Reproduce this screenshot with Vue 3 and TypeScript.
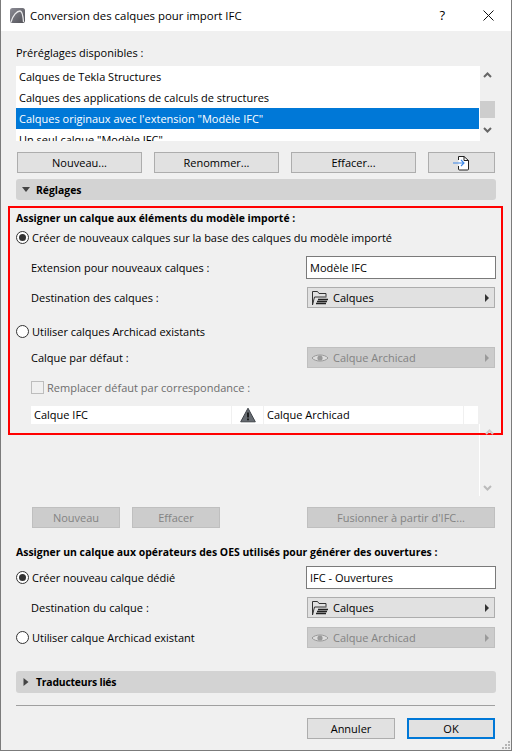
<script setup lang="ts">
const presets: string[] = [
  'Calques de Tekla Structures',
  'Calques des applications de calculs de structures',
  'Calques originaux avec l\'extension "Modèle IFC"',
  'Un seul calque "Modèle IFC"',
]
const selectedPreset = 2
</script>

<template>
  <div class="window">
    <header class="titlebar">
      <svg class="logo" width="15" height="15" viewBox="0 0 15 15">
        <defs>
          <linearGradient id="lg" x1="0" y1="0" x2="1" y2="1">
            <stop offset="0" stop-color="#8d8d96" />
            <stop offset="1" stop-color="#4f4f55" />
          </linearGradient>
        </defs>
        <rect width="15" height="15" rx="2.5" fill="url(#lg)" />
        <path d="M1 14C3 7 7 3 10 3c2 0 3 4 3.500 11" fill="none" stroke="#e8e8ea" stroke-width="1.300" />
      </svg>
      <span class="title">Conversion des calques pour import IFC</span>
      <span class="help">?</span>
      <svg class="close" width="11" height="11" viewBox="0 0 11 11">
        <path d="M.5.5l10 10M10.500.5l-10 10" stroke="#111" stroke-width="1" fill="none" />
      </svg>
    </header>

    <main class="body">
      <div class="label presets-label">Préréglages disponibles :</div>
      <div class="presets">
        <ul class="list">
          <li v-for="(p, i) in presets" :key="p" :class="{ sel: i === selectedPreset }">{{ p }}</li>
        </ul>
        <div class="scroll">
          <svg width="9" height="6" viewBox="0 0 9 6"><path d="M1 5l3.500-3.500L8 5" fill="none" stroke="#666" stroke-width="2" /></svg>
          <div class="thumb"></div>
          <svg width="9" height="6" viewBox="0 0 9 6"><path d="M1 1l3.500 3.500L8 1" fill="none" stroke="#666" stroke-width="2" /></svg>
        </div>
      </div>

      <div class="preset-btns">
        <button class="btn w125">Nouveau...</button>
        <button class="btn w125">Renommer...</button>
        <button class="btn w125">Effacer...</button>
        <button class="btn w67">
          <svg width="17" height="16" viewBox="0 0 17 16">
            <path d="M5.500 5V1.500H11L15.500 5.500V14a1 1 0 0 1-1 1H6.500a1 1 0 0 1-1-1V11" fill="#fff" stroke="#222" />
            <path d="M11 1.500V5.500h4.500" fill="none" stroke="#222" />
            <path d="M0 8h11M8 5l3 3-3 3" fill="none" stroke="#3a86e8" stroke-width="1.100" />
          </svg>
        </button>
      </div>

      <div class="section-bar settings-bar">
        <svg width="8" height="5" viewBox="0 0 8 5"><path d="M0 0h8L4 5z" fill="#444" /></svg>
        <span>Réglages</span>
      </div>

      <section class="red-box">
        <div class="heading first">Assigner un calque aux éléments du modèle importé :</div>
        <label class="row radio-row r1">
          <span class="radio on"></span>Créer de nouveaux calques sur la base des calques du modèle importé
        </label>
        <div class="row between indent r2">
          <span>Extension pour nouveaux calques :</span>
          <input class="field" value="Modèle IFC" />
        </div>
        <div class="row between indent r3">
          <span>Destination des calques :</span>
          <div class="select">
            <svg class="ic" width="18" height="16" viewBox="0 0 18 16">
              <path d="M1.500 15V1.500h5l1.500 2h7v3" fill="none" stroke="#333" />
              <path d="M1.500 15l2-8h12" fill="none" stroke="#333" />
              <path d="M7 9.500h10M6 11.500h10M5 13.500h10" stroke="#222" stroke-width="1.300" />
            </svg>
            <span class="grow">Calques</span>
            <i class="tri"></i>
          </div>
        </div>
        <label class="row radio-row r4"><span class="radio"></span>Utiliser calques Archicad existants</label>
        <div class="row between indent r5">
          <span>Calque par défaut :</span>
          <div class="select off">
            <svg class="ic" width="18" height="16" viewBox="0 0 18 16">
              <path d="M1 8c3-4 13-4 16 0-3 4-13 4-16 0z" fill="#ddd" stroke="#999" />
              <circle cx="9" cy="8" r="2.600" fill="#999" />
            </svg>
            <span class="grow">Calque Archicad</span>
            <i class="tri"></i>
          </div>
        </div>
        <label class="row indent check-row">
          <span class="check"></span>Remplacer défaut par correspondance :
        </label>
        <div class="table-head">
          <div class="c1">Calque IFC</div>
          <div class="c2">
            <svg width="16" height="16" viewBox="0 0 16 16">
              <path d="M8 1.200L15.300 14.800H.7z" fill="#676c72" stroke="#3f4349" stroke-linejoin="round" />
              <path d="M8 5.500v5M8 11.400v1.800" stroke="#111" stroke-width="1.700" />
            </svg>
          </div>
          <div class="c3">Calque Archicad</div>
          <div class="c4"></div>
        </div>
        <svg class="table-up" width="9" height="6" viewBox="0 0 9 6"><path d="M1 5l3.500-3.500L8 5" fill="none" stroke="#ccc" stroke-width="2" /></svg>
      </section>

      <div class="table-rest">
        <svg width="9" height="6" viewBox="0 0 9 6"><path d="M1 1l3.500 3.500L8 1" fill="none" stroke="#bbb" stroke-width="2" /></svg>
      </div>

      <div class="table-btns">
        <div class="left-btns">
          <button class="btn off w88">Nouveau</button>
          <button class="btn off w88">Effacer</button>
        </div>
        <button class="btn off w188">Fusionner à partir d'IFC...</button>
      </div>

      <div class="heading second">Assigner un calque aux opérateurs des OES utilisés pour générer des ouvertures :</div>
      <div class="row between r6">
        <label class="radio-row"><span class="radio on"></span>Créer nouveau calque dédié</label>
        <input class="field" value="IFC - Ouvertures" />
      </div>
      <div class="row between indent r7">
        <span>Destination du calque :</span>
        <div class="select">
          <svg class="ic" width="18" height="16" viewBox="0 0 18 16">
            <path d="M1.500 15V1.500h5l1.500 2h7v3" fill="none" stroke="#333" />
            <path d="M1.500 15l2-8h12" fill="none" stroke="#333" />
            <path d="M7 9.500h10M6 11.500h10M5 13.500h10" stroke="#222" stroke-width="1.300" />
          </svg>
          <span class="grow">Calques</span>
          <i class="tri"></i>
        </div>
      </div>
      <div class="row between r8">
        <label class="radio-row"><span class="radio"></span>Utiliser calque Archicad existant</label>
        <div class="select off">
          <svg class="ic" width="18" height="16" viewBox="0 0 18 16">
            <path d="M1 8c3-4 13-4 16 0-3 4-13 4-16 0z" fill="#ddd" stroke="#999" />
            <circle cx="9" cy="8" r="2.600" fill="#999" />
          </svg>
          <span class="grow">Calque Archicad</span>
          <i class="tri"></i>
        </div>
      </div>

      <div class="section-bar linked-bar">
        <svg width="5" height="8" viewBox="0 0 5 8"><path d="M0 0v8l5-4z" fill="#444" /></svg>
        <span>Traducteurs liés</span>
      </div>

      <hr class="sep" />

      <div class="footer">
        <button class="btn w88">Annuler</button>
        <button class="btn w88 primary">OK</button>
      </div>
    </main>
    <svg class="grip" width="9" height="9" viewBox="0 0 9 9">
      <path d="M6 0h2v2H6zM3 3h2v2H3zM6 3h2v2H6zM0 6h2v2H0zM3 6h2v2H3zM6 6h2v2H6z" fill="#b5b5b5" />
    </svg>
  </div>
</template>

<style>
html, body { margin: 0; background: #f0f0f0; }
</style>

<style scoped>
* { box-sizing: border-box; }
.window {
  position: relative;
  width: 512px;
  height: 751px;
  background: #f0f0f0;
  border: 1px solid #7b7b7b;
  border-top: 0;
  font-family: "Open Sans", "Noto Sans", sans-serif;
  font-size: 11px;
  color: #000;
  overflow: hidden;
}
.titlebar {
  height: 31px;
  background: #fff;
  display: flex;
  align-items: center;
  padding-left: 9px;
}
.logo { margin-right: 5px; }
.title { font-size: 11.4px; flex: 1; }
.help { font-size: 13px; margin-right: 38px; padding-bottom: 2px; }
.close { margin-right: 17px; }
.body { padding: 0 15px; display: flex; flex-direction: column; }
.label, .heading { line-height: 16px; }
.presets-label { margin-top: 14px; height: 21px; }
.presets { display: flex; height: 75px; }
.list {
  list-style: none;
  margin: 0;
  padding: 0;
  width: 464px;
  background: #fff;
  overflow: hidden;
}
.list li { height: 21px; line-height: 21px; padding-left: 3px; }
.list li.sel { background: #0078d7; color: #fff; margin-right: 1px; }
.scroll {
  width: 15px;
  display: flex;
  flex-direction: column;
  align-items: center;
  padding-top: 6px;
}
.thumb { width: 15px; height: 17px; background: #cdcdcd; margin: 23px 0 9px; }
.preset-btns { display: flex; gap: 12px; margin: 11px 0 6px 1px; }
.btn {
  height: 21px;
  padding: 0;
  border: 1px solid #adadad;
  background: #e1e1e1;
  font: inherit;
  color: #000;
  display: flex;
  align-items: center;
  justify-content: center;
}
.btn.off { background: #cccccc; border-color: #bfbfbf; color: #838383; }
.w125 { width: 125px; }
.w67 { width: 67px; }
.w88 { width: 88px; }
.w188 { width: 188px; }
.primary { border: 2px solid #0078d7; }
.section-bar {
  height: 21px;
  width: 480px;
  background: #d3d3d3;
  border-radius: 3px;
  display: flex;
  align-items: center;
  font-size: 10.4px;
  font-weight: 700;
  padding-left: 6px;
}
.section-bar svg { width: 8px; margin-right: 6px; }
.red-box {
  position: relative;
  margin: 6px 0 0 -8px;
  width: 495px;
  height: 229px;
  border: 2px solid #f00;
  padding: 0 6px;
}
.heading { font-weight: 700; font-size: 10.45px; }
.first { margin-top: 2px; }
.row { display: flex; align-items: center; }
.between { justify-content: space-between; }
.radio-row { display: flex; align-items: center; letter-spacing: -0.03px; }
.radio {
  width: 13px;
  height: 13px;
  border: 1px solid #333;
  border-radius: 50%;
  background: #fff;
  margin-right: 3px;
  position: relative;
  flex: none;
}
.radio.on::after {
  content: "";
  position: absolute;
  inset: 2px;
  border-radius: 50%;
  background: #333;
}
.indent { padding-left: 15px; }
.r1 { height: 16px; margin-top: 3px; }
.r2 { height: 23px; margin-top: 11px; }
.r3 { height: 21px; margin-top: 8px; }
.r4 { height: 16px; margin-top: 15px; }
.r5 { height: 21px; margin-top: 8px; }
.red-box .between { padding-right: 0; margin-right: -1px; }
.field {
  width: 190px;
  height: 23px;
  border: 1px solid #7a7a7a;
  background: #fff;
  padding: 0 3px;
  font: inherit;
  color: #000;
  outline: none;
}
.select {
  width: 188px;
  height: 21px;
  margin-right: 1px;
  border: 1px solid #adadad;
  background: #e1e1e1;
  display: flex;
  align-items: center;
  padding: 0 5px 0 3px;
}
.select .ic { margin-right: 4px; }
.grow { flex: 1; }
.tri {
  width: 0;
  height: 0;
  border-left: 4px solid #333;
  border-top: 4px solid transparent;
  border-bottom: 4px solid transparent;
}
.select.off { background: #cccccc; border-color: #bfbfbf; color: #838383; }
.select.off .tri { border-left-color: #9a9a9a; }
.check-row { height: 16px; margin-top: 11px; color: #6d6d6d; }
.check {
  width: 13px;
  height: 13px;
  margin-right: 3px;
  background: #f0f0f0;
  border: 1px solid #bdbdbd;
}
.table-head {
  display: flex;
  margin: 11px 0 0 15px;
  height: 18px;
  width: 447px;
  line-height: 18px;
}
.table-head > div { background: #fff; margin-right: 1px; padding-left: 3px; }
.c1 { width: 200px; }
.c2 { width: 31px; display: flex; align-items: center; justify-content: center; padding: 0 !important; }
.c3 { width: 199px; }
.c4 { width: 14px; margin-right: 0 !important; padding: 0 !important; }
.table-up { position: absolute; left: 475px; top: 221px; }
.red-box::after {
  content: "";
  position: absolute;
  left: 469px;
  top: 216px;
  bottom: 0;
  width: 1px;
  background: #fff;
}
.table-rest {
  height: 61px;
  margin-left: 463px;
  width: 16px;
  border-left: 1px solid #fff;
  display: flex;
  justify-content: center;
  align-items: flex-end;
  padding-bottom: 5px;
}
.table-btns { display: flex; justify-content: space-between; margin: 11px 0 0 16px; padding-right: 1px; }
.left-btns { display: flex; gap: 12px; }
.second { margin-top: 16px; }
.r6 { height: 23px; margin-top: 6px; }
.r7 { height: 21px; margin-top: 8px; }
.r8 { height: 21px; margin-top: 9px; }
.linked-bar { margin-top: 23px; height: 22px; padding-bottom: 1px; letter-spacing: -0.2px; }
.sep {
  width: 479px;
  margin: 12px 0 0;
  border: 0;
  border-top: 1px solid #a0a0a0;
}
.footer { display: flex; justify-content: flex-end; gap: 12px; margin-top: 12px; padding-right: 1px; }
.grip { position: absolute; right: 0; bottom: 0; }
</style>
